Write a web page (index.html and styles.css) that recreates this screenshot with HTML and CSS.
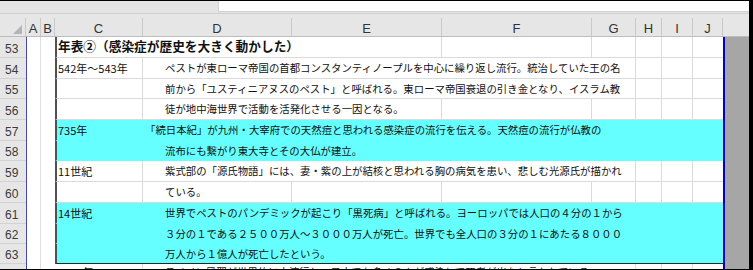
FILE: index.html
```html
<!DOCTYPE html>
<html lang="ja">
<head>
<meta charset="utf-8">
<title>年表②</title>
<link rel="stylesheet" href="styles.css">
</head>
<body>
<div class="frame">
  <div class="fbar"><div class="fbox"></div></div>
  <div class="hdr">
    <div class="corner"><svg width="9" height="9" viewBox="0 0 9 9"><polygon points="9,0 9,9 0,9" fill="#b4b4b4"/></svg></div>
    <div>A</div><div>B</div><div>C</div><div>D</div><div>E</div><div>F</div><div>G</div><div>H</div><div>I</div><div>J</div><div class="hb"></div><div class="hr"></div>
  </div>

  <div class="row wh">
    <div class="rh">53</div><div class="a"></div><div class="b"></div>
    <div class="x c s3 vr title">年表②（感染症が歴史を大きく動かした）</div>
    <div class="x vr"></div><div class="x vr"></div><div class="x vr"></div><div class="x vr"></div><div class="x"></div>
    <div class="blue"></div><div class="gray"></div>
  </div>

  <div class="row wh">
    <div class="rh">54</div><div class="a"></div><div class="b"></div>
    <div class="x c vr yr">542年～543年</div>
    <div class="x s4 vr d">ペストが東ローマ帝国の首都コンスタンティノープルを中心に繰り返し流行。統治していた王の名</div>
    <div class="x vr"></div><div class="x vr"></div><div class="x"></div>
    <div class="blue"></div><div class="gray"></div>
  </div>

  <div class="row wh r20">
    <div class="rh">55</div><div class="a"></div><div class="b"></div>
    <div class="x c vr yr"></div>
    <div class="x s4 vr d">前から「ユスティニアヌスのペスト」と呼ばれる。東ローマ帝国衰退の引き金となり、イスラム教</div>
    <div class="x vr"></div><div class="x vr"></div><div class="x"></div>
    <div class="blue"></div><div class="gray"></div>
  </div>

  <div class="row wh">
    <div class="rh">56</div><div class="a"></div><div class="b"></div>
    <div class="x c vr yr"></div>
    <div class="x s2 vr d">徒が地中海世界で活動を活発化させる一因となる。</div>
    <div class="x vr"></div><div class="x vr"></div><div class="x vr"></div><div class="x vr"></div><div class="x"></div>
    <div class="blue"></div><div class="gray"></div>
  </div>

  <div class="row cy">
    <div class="rh">57</div><div class="a"></div><div class="b"></div>
    <div class="x c yr">735年</div>
    <div class="x s7 d0">「続日本紀」が九州・大宰府での天然痘と思われる感染症の流行を伝える。天然痘の流行が仏教の</div>
    <div class="blue"></div><div class="gray"></div>
  </div>

  <div class="row cy r20">
    <div class="rh">58</div><div class="a"></div><div class="b"></div>
    <div class="x c yr"></div>
    <div class="x s7 d">流布にも繋がり東大寺とその大仏が建立。</div>
    <div class="blue"></div><div class="gray"></div>
  </div>

  <div class="row wh">
    <div class="rh">59</div><div class="a"></div><div class="b"></div>
    <div class="x c vr yr">11世紀</div>
    <div class="x s4 vr d">紫式部の「源氏物語」には、妻・紫の上が結核と思われる胸の病気を患い、悲しむ光源氏が描かれ</div>
    <div class="x vr"></div><div class="x vr"></div><div class="x"></div>
    <div class="blue"></div><div class="gray"></div>
  </div>

  <div class="row wh">
    <div class="rh">60</div><div class="a"></div><div class="b"></div>
    <div class="x c vr yr"></div>
    <div class="x vr d">ている。</div>
    <div class="x vr"></div><div class="x vr"></div><div class="x vr"></div><div class="x vr"></div><div class="x vr"></div><div class="x"></div>
    <div class="blue"></div><div class="gray"></div>
  </div>

  <div class="row cy">
    <div class="rh">61</div><div class="a"></div><div class="b"></div>
    <div class="x c yr">14世紀</div>
    <div class="x s7 d">世界でペストのパンデミックが起こり「黒死病」と呼ばれる。ヨーロッパでは人口の４分の１から</div>
    <div class="blue"></div><div class="gray"></div>
  </div>

  <div class="row cy r20">
    <div class="rh">62</div><div class="a"></div><div class="b"></div>
    <div class="x c yr"></div>
    <div class="x s7 d">３分の１である２５００万人～３０００万人が死亡。世界でも全人口の３分の１にあたる８０００</div>
    <div class="blue"></div><div class="gray"></div>
  </div>

  <div class="row cy last r20">
    <div class="rh">63</div><div class="a"></div><div class="b"></div>
    <div class="x c yr"></div>
    <div class="x s7 d">万人から１億人が死亡したという。</div>
    <div class="blue"></div><div class="gray"></div>
  </div>

  <div class="row wh r64">
    <div class="rh"></div><div class="a"></div><div class="b"></div>
    <div class="x c64 vr yr">1918年</div>
    <div class="x s4 vr d">スペイン風邪が世界的に大流行し、日本でも多くの人が感染して死者が出たと言われている。</div>
    <div class="x vr"></div><div class="x vr"></div><div class="x"></div>
    <div class="blue"></div><div class="gray"></div>
  </div>
</div>
</body>
</html>
```

FILE: styles.css
```css
* { box-sizing: border-box; margin: 0; padding: 0; }

body { margin: 0; background: #fff; }

.frame {
  --cols: 26px 15px 14px 88px 149px 150px 150px 44px 26px 31px 30px 2px 24px;
  width: 753px;
  height: 270px;
  border-top: 1px solid #000;
  border-right: 4px solid #000;
  border-bottom: 1px solid #000;
  overflow: hidden;
  background: #fff;
  font-family: "Noto Sans CJK JP", sans-serif;
  color: #111;
}

/* formula strip */
.fbar {
  height: 13px;
  background: #e4e4e4;
  border-bottom: 1px solid #d0d0d0;
  display: flex;
  padding-left: 218px;
}
.fbox {
  flex: 1;
  height: 11px;
  background: #fff;
  border-left: 1px solid #cfcfcf;
  border-bottom: 1px solid #cfcfcf;
}

/* column headers */
.hdr {
  display: grid;
  grid-template-columns: var(--cols);
  height: 23px;
  padding-top: 4px;
  background: #e6e6e6;
  border-bottom: 1px solid #bcbcbc;
}
.hdr > div {
  border-right: 1px solid #c9c9c9;
  display: flex;
  align-items: flex-end;
  justify-content: center;
  font: 13px/13px "Liberation Sans", Arial, sans-serif;
  color: #333;
  padding-bottom: 1px;
}
.hdr > .corner {
  justify-content: flex-end;
  padding: 0 3px 2px 0;
}
.hdr > .hb { border-right: none; }
.hdr > .hr { border-right: none; }

/* rows */
.row {
  display: grid;
  grid-template-columns: var(--cols);
  height: 21px;
}
.row.r20 { height: 20px; }
.row.r64 { height: 21px; }

.rh {
  background: #e6e6e6;
  border-bottom: 1px solid #d2d2d2;
  display: flex;
  align-items: flex-end;
  padding: 0 0 2px 5px;
  font: 12px/12px "Liberation Sans", Arial, sans-serif;
  color: #3a3a3a;
}

.a {
  background: #fff;
  border-left: 1px solid #4646b4;
  border-right: 1px solid #e0e0e0;
}
.b { background: #fff; }

.x {
  display: flex;
  align-items: center;
  white-space: nowrap;
  min-width: 0;
  font-size: 10.4px;
  line-height: 14px;
  border-bottom: 1px solid #dadada;
  background: #fff;
}
.cy .x {
  background: #66ffff;
  border-bottom-color: #66ffff;
}
.last .x { border-bottom: 1px solid #262626; }

.vr { border-right: 1px solid #dadada; }

.c {
  border-left: 2px solid #505050;
  padding-left: 1px;
}
.c64 { padding-left: 3px; }
.yr { font-size: 11px; }

.title {
  font-size: 12.7px;
  font-weight: bold;
  padding-bottom: 3px;
}

.d { padding-left: 22px; }
.d0 { padding-left: 2px; }

.s2 { grid-column: span 2; }
.s3 { grid-column: span 3; }
.s4 { grid-column: span 4; }
.s7 { grid-column: span 7; }

.r64 .x { align-items: flex-start; padding-top: 1px; }

.blue { background: #0000c8; }
.gray { background: #a6a6a6; }
```
